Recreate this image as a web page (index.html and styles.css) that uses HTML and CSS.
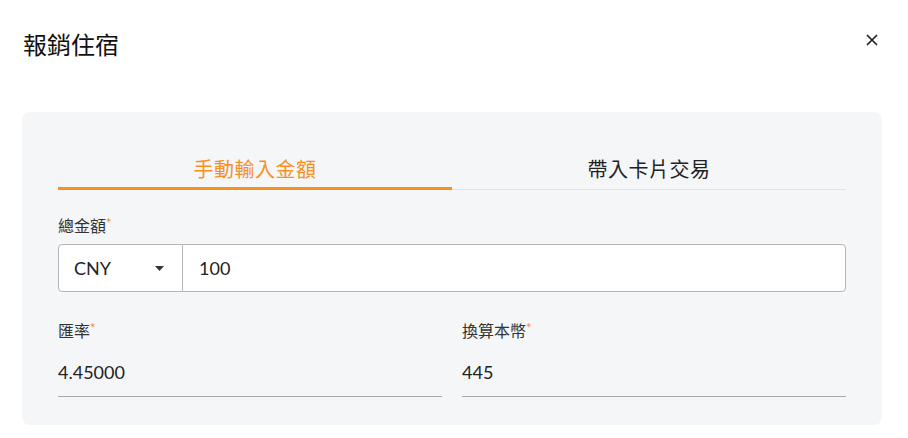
FILE: index.html
```html
<!DOCTYPE html>
<html lang="zh-Hant">
<head>
  <meta charset="UTF-8">
  <meta name="viewport" content="width=device-width, initial-scale=1.0">
  <title>報銷住宿</title>
  <link rel="stylesheet" href="styles.css">
</head>
<body>
  <div class="modal">
    <div class="modal-header">
      <h1 class="modal-title">報銷住宿</h1>
      <button class="close-btn" aria-label="close">
        <svg width="12" height="12" viewBox="0 0 12 12">
          <path d="M1 1 L11 11 M11 1 L1 11" stroke="#1a1a1a" stroke-width="1.6" fill="none"/>
        </svg>
      </button>
    </div>

    <div class="panel">
      <div class="tabs">
        <div class="tab active">手動輸入金額</div>
        <div class="tab">帶入卡片交易</div>
      </div>

      <div class="field">
        <label class="label">總金額<span class="req">*</span></label>
        <div class="amount-box">
          <div class="currency">
            <span>CNY</span>
            <svg width="9" height="5" viewBox="0 0 9 5"><path d="M0 0 H9 L4.5 5 Z" fill="#333"/></svg>
          </div>
          <input class="amount" type="text" value="100">
        </div>
      </div>

      <div class="row">
        <div class="field col">
          <label class="label">匯率<span class="req">*</span></label>
          <input class="line-input" type="text" value="4.45000">
        </div>
        <div class="field col">
          <label class="label">換算本幣<span class="req">*</span></label>
          <input class="line-input" type="text" value="445">
        </div>
      </div>
    </div>
  </div>
</body>
</html>
```

FILE: styles.css
```css
body {
  margin: 0;
  background: #fff;
  color: #222;
  font-family: Lato, "Noto Sans CJK TC", sans-serif;
}
.modal {
  padding: 27px 26px 0 22px;
}
.modal-header {
  display: flex;
  justify-content: space-between;
  align-items: flex-start;
  height: 85px;
}
.modal-title {
  margin: 0 0 0 1px;
  font-size: 24px;
  line-height: 36px;
  font-weight: 400;
  color: #111;
}
.close-btn {
  border: none;
  background: none;
  padding: 0;
  margin: 7px 4px 0 0;
  width: 12px;
  height: 12px;
  cursor: pointer;
  display: flex;
}
.panel {
  background: #f5f6f8;
  border-radius: 8px;
  padding: 28px 36px;
}
.tabs {
  display: flex;
  border-bottom: 1px solid #e1e2e4;
}
.tab {
  flex: 1;
  text-align: center;
  font-size: 20px;
  line-height: 28px;
  padding: 15px 0 4px;
  border-bottom: 3px solid transparent;
  margin-bottom: -1px;
  color: #222;
  letter-spacing: 0.5px;
}
.tab.active {
  color: #f7901e;
  border-bottom-color: #f7901e;
}
.field {
  margin-top: 24px;
}
.label {
  display: block;
  font-size: 16px;
  line-height: 24px;
  color: #333;
}
.req {
  color: #f7844a;
  font-size: 13px;
  vertical-align: top;
  line-height: 18px;
}
.amount-box {
  display: flex;
  margin-top: 6px;
  height: 48px;
  box-sizing: border-box;
  border: 1px solid #b5b5b5;
  border-radius: 4px;
  background: #fff;
}
.currency {
  width: 124px;
  box-sizing: border-box;
  padding: 0 18px 0 15px;
  display: flex;
  align-items: center;
  justify-content: space-between;
  border-right: 1px solid #b5b5b5;
  font-size: 18px;
  color: #222;
}
.amount {
  flex: 1;
  border: none;
  outline: none;
  background: transparent;
  padding: 0 16px;
  font: inherit;
  font-size: 18px;
  color: #222;
}
.row {
  display: flex;
  gap: 20px;
  margin-top: 27px;
}
.row .field {
  margin-top: 0;
}
.col {
  flex: 1;
}
.line-input {
  display: block;
  width: 100%;
  box-sizing: border-box;
  border: none;
  border-bottom: 1px solid #a9a9a9;
  background: transparent;
  outline: none;
  font: inherit;
  font-size: 18px;
  line-height: 24px;
  height: 54px;
  padding: 17px 0 12px;
  color: #222;
}
```
